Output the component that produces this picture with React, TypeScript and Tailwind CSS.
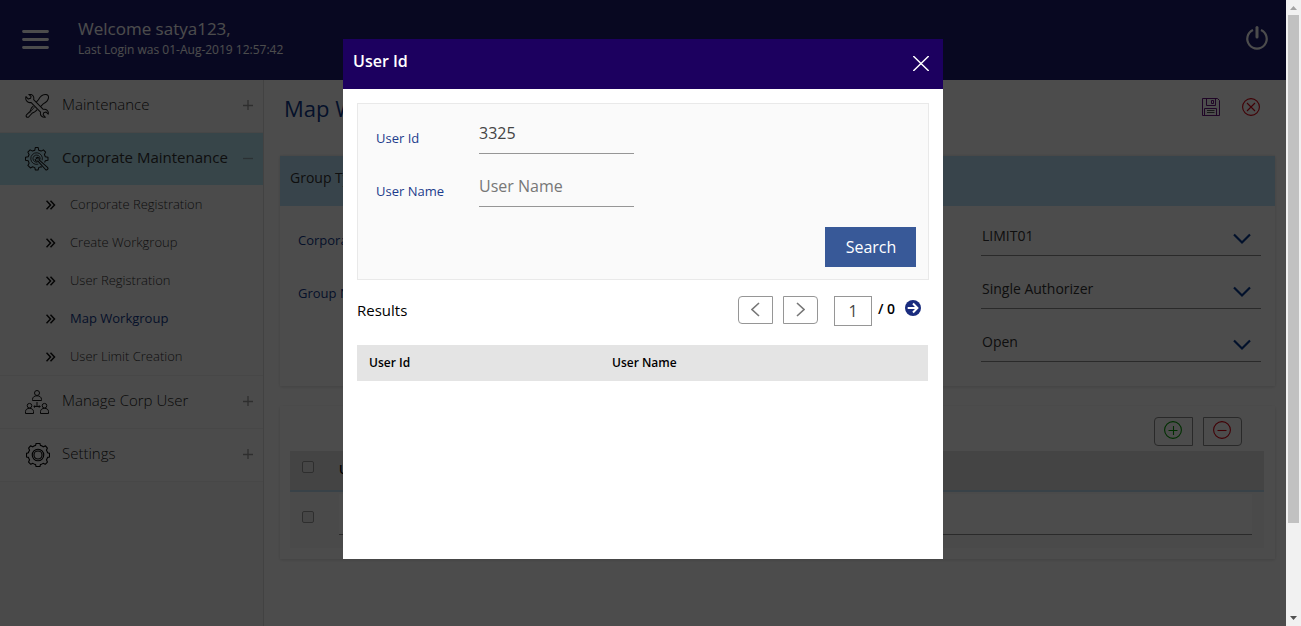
import React from "react";

const subItems = ["Corporate Registration", "Create Workgroup", "User Registration", "Map Workgroup", "User Limit Creation"];

function ToolsIcon() {
  return (
    <svg width="24" height="24" viewBox="0.500 0.500 25 25" fill="none" stroke="#151515" strokeWidth="1.050" strokeLinejoin="round">
      <path d="M1.500 3.200 4 5.800 6.300 5 6.800 2.900 4.500 .9C7.500 .3 10.500 2.500 9.500 6.300L19.500 16.500C22.700 15.500 25.500 18.500 24.700 21.500L22.300 19.200 20 20 19.400 22.300 21.800 24.700C18.500 25.300 15.800 22.700 16.700 19.300L6.700 9.300C3.200 10.300 .5 6.700 1.500 3.200Z" />
      <path d="M12.300 9 14.500 6.500C15.500 4.500 18.500 1 22 1 24 1 25.200 2.500 25 4.300 24.700 7.500 21 10 19.500 10.800L17 13.300" />
      <path d="M9.200 13 7.500 14.700C6.500 15.700 7 16.800 5.500 18.800L2 22.300C1.300 23.300 1.700 24.200 2.600 24.700 3.500 25 4 24.700 5 23.700L8 20.500C9 19.600 10.700 19.300 11.300 18.700L13.200 16.700" />
      <path d="M10.300 14.200 5 20.500" strokeWidth=".8" />
    </svg>
  );
}

function GearWrenchIcon() {
  return (
    <svg width="24" height="24" viewBox="0.500 0.500 23.500 23.500" fill="none" stroke="#151515" strokeWidth="1" strokeLinejoin="round">
      <path d="M17 20.300 16 19.800 13.900 20.700 13.400 23H10.600L10.100 20.700 8 19.800 5.800 21 3.300 18.500 4.500 16.300 3.600 13.900 1 13.400V10.600L3.600 10.100 4.500 7.900 3.300 5.500 5.500 3.300 7.900 4.500 10.100 3.600 10.600 1H13.400L13.900 3.600 16.300 4.500 18.500 3.300 20.700 5.500 19.500 7.900 20.400 10.100 23 10.600V13.400L20.400 13.900 19.700 15.700" />
      <path d="M17.300 13.500A5.700 5.700 0 1 0 13.500 17.300" strokeWidth=".8" />
      <path d="M15.200 12.800A3.500 3.500 0 1 0 12.600 15.300" strokeWidth=".8" />
      <path d="M11 11 12.300 12.200V10.500C13.800 10.300 14.700 11.700 14.300 13.200L22.800 20.800C23.500 21.800 22 23.600 20.800 22.800L13.200 14.300C11.700 14.700 10.300 13.800 10.500 12.300" />
    </svg>
  );
}

function UsersIcon() {
  return (
    <svg width="24" height="24" viewBox="0 0 24 24" fill="none" stroke="#151515" strokeWidth="1">
      <circle cx="12" cy="3" r="2.500" />
      <path d="M7.500 10.500V9.500C7.500 7 9.500 5.800 12 5.800S16.500 7 16.500 9.500V10.500ZM12 12V16.500M9 16.500H15M10 15.300 8.800 16.500 10 17.700M14 15.300 15.200 16.500 14 17.700" />
      <circle cx="4.500" cy="15.700" r="2.300" />
      <path d="M.5 23.500V21.500C.5 19.500 2.300 18.300 4.500 18.300S8.500 19.500 8.500 21.500V23.500Z" />
      <circle cx="19.500" cy="15.700" r="2.300" />
      <path d="M15.500 23.500V21.500C15.500 19.500 17.300 18.300 19.500 18.300S23.500 19.500 23.500 21.500V23.500Z" />
    </svg>
  );
}

function GearIcon() {
  return (
    <svg className="translate-x-px" width="24" height="24" viewBox="0.500 0.500 25 25" fill="none" stroke="#000" strokeWidth="1.150" strokeLinejoin="round">
      <path d="M11 1H15L15.500 3Q17.500 3.500 18.500 4.500L20.800 3.500 22.800 5.800 21.800 8Q22.700 9.300 23 10.700L25 11.300V15L23 15.500Q22.700 16.800 21.800 18L22.800 20.300 20.500 22.700 18.300 21.700Q17 22.600 15.500 23L15 25H11L10.500 23Q9 22.600 7.700 21.700L5.500 22.700 3.200 20.300 4.200 18Q3.300 16.800 3 15.500L1 15V11.300L3 10.700Q3.300 9.300 4.200 8L3.200 5.800 5.200 3.500 7.500 4.500Q8.500 3.500 10.500 3Z" />
      <circle cx="13" cy="13" r="6" />
      <circle cx="13" cy="13" r="4.200" />
    </svg>
  );
}

function Toggle({ open }: { open?: boolean }) {
  return (
    <svg className="mb-[3px]" width="10" height="10" viewBox="0 0 10 10" stroke={open ? "#8fa6b0" : "#9a9a9a"} strokeWidth="1.300">
      <path d={open ? "M0 5.500H10" : "M0 5.500H10M5 0V10"} />
    </svg>
  );
}

function MenuItem({ icon, label, open }: { icon: React.ReactNode; label: string; open?: boolean }) {
  return (
    <div className={open ? "flex h-[52px] items-center bg-[#b9e6f3] pr-[10px] pl-[25px]" : "flex h-[53px] items-center border-b border-[#efefef] bg-[#fbfbfb] pr-[10px] pl-[25px]"}>
      {icon}
      <span className={open ? "mb-[3px] ml-[13px] flex-1 text-[15px] text-[#333]" : "mb-[3px] ml-[13px] flex-1 text-[15px] font-light text-[#222]"}>{label}</span>
      <Toggle open={open} />
    </div>
  );
}

function SelectRow({ label, value }: { label?: string; value: string }) {
  return (
    <div className="flex h-[53px] items-start justify-between pr-[14px] pl-[18px]">
      <span className="pt-[11px] text-[13px] leading-[20px] text-[#123a8c]">{label}</span>
      <div className="flex h-[37px] w-[280px] items-start justify-between border-b border-[#8c8c8c] pr-[10px] pl-px">
        <span className="pt-[7px] text-[14px] leading-[20px] text-[#333]">{value}</span>
        <svg className="mt-[14px]" width="18" height="12" viewBox="0 0 18 12" fill="none" stroke="#083a92" strokeWidth="2.200">
          <path d="M1 1.500 9 9.500 17 1.500" />
        </svg>
      </div>
    </div>
  );
}

function Checkbox() {
  return <span className="block h-3 w-3 rounded-[2px] border border-[#9a9a9a] bg-[#ececec]" />;
}

function Field({ label, value, placeholder }: { label: string; value?: string; placeholder?: boolean }) {
  return (
    <div className="flex h-[53px] items-start">
      <span className="w-[103px] pt-[12px] text-[13px] leading-[20px] text-[#1c3c8c]">{label}</span>
      <span className={placeholder ? "h-[38px] w-[155px] border-b border-[#969696] pt-[4px] text-[16px] leading-[26px] text-[#777]" : "h-[38px] w-[155px] border-b border-[#969696] pt-[4px] text-[16px] leading-[26px] text-[#444]"}>{value}</span>
    </div>
  );
}

export default function App() {
  return (
    <div className="relative flex h-[626px] w-[1301px] overflow-hidden bg-white font-['Open_Sans','Noto_Sans',sans-serif]">
      <div className="flex w-[1286px] flex-col">
        <header className="flex h-20 shrink-0 items-start bg-[#1b1b71] pr-[17px] pl-[22px] text-white">
          <svg className="mt-[29px]" width="27" height="21" viewBox="0 0 27 21" stroke="#fff" strokeWidth="2.800" strokeLinecap="round">
            <path d="M1.500 2.500H25.500M1.500 10.500H25.500M1.500 18.500H25.500" />
          </svg>
          <div className="ml-[29px] flex-1 pt-[17px]">
            <div className="text-[17px] leading-[24px]">Welcome satya123,</div>
            <div className="text-[12px] leading-[18px]">Last Login was 01-Aug-2019 12:57:42</div>
          </div>
          <svg className="mt-[25px]" width="24" height="26" viewBox="0 0 24 26" fill="none" stroke="#fff" strokeWidth="2.200">
            <path d="M8 5A9.700 9.700 0 1 0 16 5" />
            <path d="M12 2.500V12" strokeWidth="3" strokeLinecap="round" />
          </svg>
        </header>
        <div className="flex flex-1">
          <aside className="w-[264px] shrink-0 border-r border-[#dcdcdc] bg-[#f9f9f9]">
            <MenuItem icon={<ToolsIcon />} label="Maintenance" />
            <MenuItem icon={<GearWrenchIcon />} label="Corporate Maintenance" open />
            <div className="h-[191px] border-b border-[#efefef] bg-[#fbfbfb]">
              {subItems.map((s) => (
                <div key={s} className="flex h-[38px] items-center pt-[2px] pl-[46px]">
                  <svg width="10" height="10" viewBox="0 0 10 10" fill="none" stroke="#111" strokeWidth="1.500">
                    <path d="M.5 .7 4.500 5 .5 9.300M4.500 .7 8.500 5 4.500 9.300" />
                  </svg>
                  <span className={s === "Map Workgroup" ? "ml-[14px] text-[13px] text-[#123a8c]" : "ml-[14px] text-[13px] font-light text-[#333]"}>{s}</span>
                </div>
              ))}
            </div>
            <MenuItem icon={<UsersIcon />} label="Manage Corp User" />
            <MenuItem icon={<GearIcon />} label="Settings" />
          </aside>
          <main className="flex-1 pr-[11px] pl-4">
            <div className="flex h-[75px] items-start justify-between pr-[15px] pl-[4px]">
              <h1 className="pt-[12px] text-[22px] leading-[32px] text-[#0f3a8c]">Map Workgroup</h1>
              <div className="flex gap-[22px] pt-[18px]">
                <svg width="18" height="18" viewBox="0 0 18 18" fill="none" stroke="#68117f" strokeWidth="1">
                  <path d="M.5 .5H15.500L17.500 2.500V17.500H.5ZM4.500 .5V7.500H13.500V.5M9.500 2.500H11.500V5.500H9.500ZM2.500 17.500V10.500H14.500V17.500" />
                  <path d="M5 12.500H12.500M5 14.500H12.500" stroke="#555" />
                </svg>
                <svg width="18" height="18" viewBox="0 0 18 18" fill="none" stroke="#d50010" strokeWidth="1.100">
                  <circle cx="9" cy="9" r="8.400" />
                  <path d="M5 5 13 13M13 5 5 13" />
                </svg>
              </div>
            </div>
            <section className="h-[231px] border-t border-[#f2f2f2] bg-white shadow-[0_1px_3px_rgba(0,0,0,0.14)]">
              <div className="mb-[13px] h-[50px] bg-[#bde5fb] pt-[11px] pl-[10px] text-[14px] leading-[22px] text-[#333]">Group Type</div>
              <SelectRow label="Corporate Id" value="LIMIT01" />
              <SelectRow label="Group Name" value="Single Authorizer" />
              <SelectRow value="Open" />
            </section>
            <section className="mt-5 h-[153px] bg-white pr-[11px] pl-[10px] shadow-[0_1px_3px_rgba(0,0,0,0.14)]">
              <div className="flex h-[45px] justify-end gap-[10px] pt-[11px] pr-[22px]">
                <span className="flex h-[29px] w-[39px] items-start rounded-l border border-[#8a8a8a] pt-[3px] pl-[9px]">
                  <svg width="18" height="18" viewBox="0 0 18 18" fill="none" stroke="#009a00" strokeWidth="1.100">
                    <circle cx="9" cy="9" r="8.400" />
                    <path d="M4.500 9.500H13.500M9.500 5V14" />
                  </svg>
                </span>
                <span className="flex h-[29px] w-[39px] items-start rounded-r border border-[#8a8a8a] pt-[3px] pl-[9px]">
                  <svg width="18" height="18" viewBox="0 0 18 18" fill="none" stroke="#d50010" strokeWidth="1.100">
                    <circle cx="9" cy="9" r="8.400" />
                    <path d="M4.500 9.500H13.500" />
                  </svg>
                </span>
              </div>
              <div className="flex h-[41px] items-start border-b-2 border-[#bfdcf2] bg-[#e4e4e4] pt-[10px] pl-3">
                <Checkbox />
                <span className="ml-[25px] text-[12px] leading-[18px] font-semibold text-black">User Id</span>
              </div>
              <div className="flex h-[56px] items-start bg-[#f8f8f8] pr-3 pl-3">
                <div className="w-[37px] shrink-0 pt-[19px]">
                  <Checkbox />
                </div>
                <div className="mt-[2px] h-[41px] flex-1 border-b border-[#8c8c8c] bg-white" />
              </div>
            </section>
          </main>
        </div>
      </div>

      <div className="flex w-[15px] flex-col items-center bg-[#f1f1f1]">
        <svg width="15" height="15" viewBox="0 0 15 15" fill="#a3a3a3">
          <path d="M4 10 7.500 6 11 10Z" />
        </svg>
        <div className="h-[508px] w-[11px] bg-[#c1c1c1]" />
        <svg className="mt-auto" width="15" height="15" viewBox="0 0 15 15" fill="#505050">
          <path d="M4 5 7.500 9 11 5Z" />
        </svg>
      </div>

      <div className="absolute top-0 left-0 flex h-[626px] w-[1286px] items-start justify-center bg-black/70 pt-[39px]">
        <div className="h-[520px] w-[600px] bg-white">
          <div className="flex h-[50px] items-start justify-between bg-[#1c005f] pr-[14px] pl-[10px]">
            <span className="pt-[10px] text-[16px] leading-[24px] font-semibold text-white">User Id</span>
            <svg className="mt-[17px]" width="16" height="15" viewBox="0 0 16 15" stroke="#fff" strokeWidth="1.400">
              <path d="M.3 0 15.700 15M15.700 0 .3 15" />
            </svg>
          </div>
          <div className="px-[14px] pt-[14px]">
            <div className="flex h-[177px] w-[572px] flex-col border border-[#e9e9e9] bg-[#fafafa] pt-[12px] pr-3 pl-[18px]">
              <Field label="User Id" value="3325" />
              <Field label="User Name" value="User Name" placeholder />
              <button className="mt-[5px] h-10 w-[91px] self-end bg-[#385998] pl-px text-[16px] text-white">Search</button>
            </div>
            <div className="flex h-[65px] items-start pt-4 pr-[8px]">
              <span className="flex-1 pt-[3px] text-[15px] leading-[22px] text-black">Results</span>
              <span className="flex h-[28px] w-[35px] justify-center rounded-l border border-[#969696] pt-[5px] pr-px">
                <svg width="9" height="15" viewBox="0 0 9 15" fill="none" stroke="#777" strokeWidth="1.600">
                  <path d="M8 1 1 7.500 8 14" />
                </svg>
              </span>
              <span className="ml-[10px] flex h-[28px] w-[35px] justify-center rounded-r border border-[#969696] pt-[5px]">
                <svg width="9" height="15" viewBox="0 0 9 15" fill="none" stroke="#777" strokeWidth="1.600">
                  <path d="M1 1 8 7.500 1 14" />
                </svg>
              </span>
              <span className="ml-4 h-[30px] w-[38px] border border-[#969696] text-center text-[16px] leading-[29px] text-[#444]">1</span>
              <span className="ml-[6px] w-[27px] pt-[3px] text-[14px] leading-[20px] font-semibold text-black">/ 0</span>
              <svg className="mt-[4px]" width="16" height="16" viewBox="0 0 16 16" fill="none" stroke="#fff" strokeWidth="2">
                <circle cx="8" cy="8" r="8" fill="#1a2c7e" stroke="none" />
                <path d="M2.700 8H12M8 3.500 12.400 8 8 12.500" />
              </svg>
            </div>
            <div className="flex h-[36px] w-[571px] bg-[#e4e4e4] pt-[9px] pl-3 text-[12px] leading-[17px] font-semibold text-black">
              <span className="w-[243px]">User Id</span>
              <span>User Name</span>
            </div>
          </div>
        </div>
      </div>
    </div>
  );
}
